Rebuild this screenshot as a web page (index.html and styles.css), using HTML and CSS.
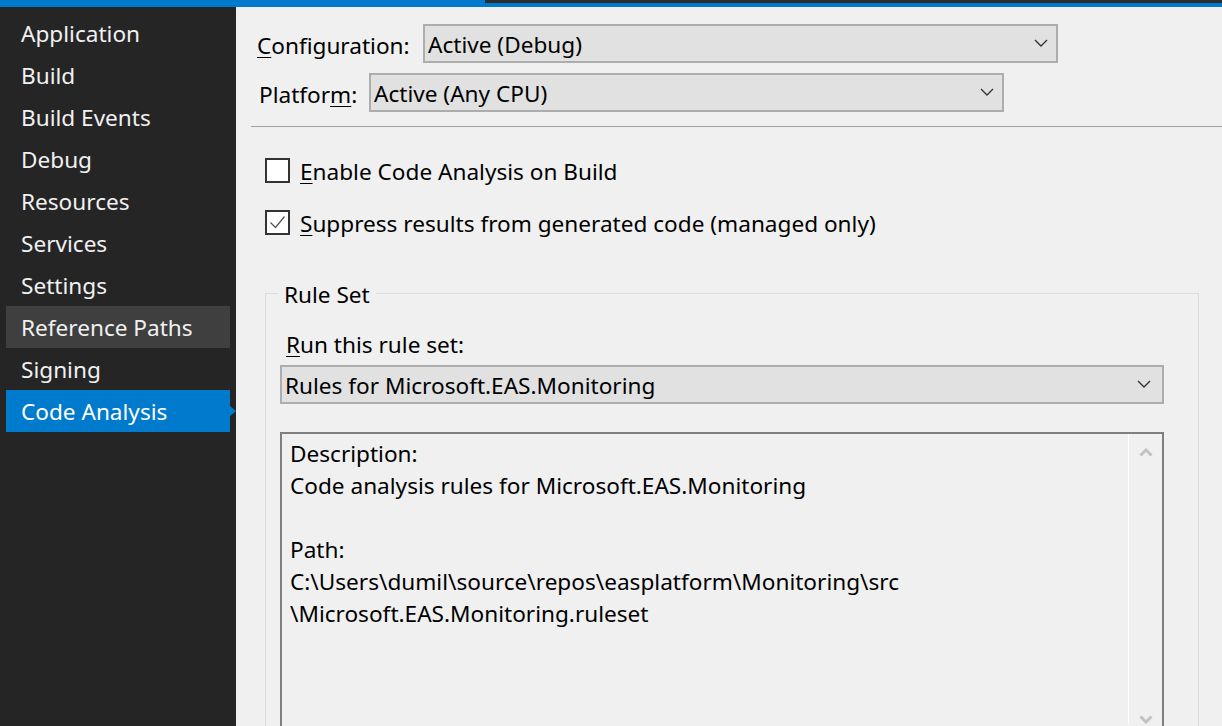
FILE: index.html
```html
<!DOCTYPE html>
<html>
<head>
<meta charset="utf-8">
<link rel="stylesheet" href="styles.css">
</head>
<body>
<div class="topbar"><div class="tab-on"></div><div class="tab-off"></div></div>
<div class="main">
  <nav class="sidebar">
    <div class="nav-item">Application</div>
    <div class="nav-item">Build</div>
    <div class="nav-item">Build Events</div>
    <div class="nav-item">Debug</div>
    <div class="nav-item">Resources</div>
    <div class="nav-item">Services</div>
    <div class="nav-item">Settings</div>
    <div class="nav-item hover">Reference Paths</div>
    <div class="nav-item">Signing</div>
    <div class="nav-item selected">Code Analysis</div>
  </nav>
  <section class="content">
    <div class="config">
      <div class="row">
        <label class="lbl-config"><u>C</u>onfiguration:</label>
        <div class="combo">Active (Debug)<svg class="chev" width="14" height="8" viewBox="0 0 14 8"><path d="M1 1 L7 7 L13 1" fill="none" stroke="#333" stroke-width="1.4"/></svg></div>
      </div>
      <div class="row">
        <label class="lbl-platform">Platfor<u>m</u>:</label>
        <div class="combo">Active (Any CPU)<svg class="chev" width="14" height="8" viewBox="0 0 14 8"><path d="M1 1 L7 7 L13 1" fill="none" stroke="#333" stroke-width="1.4"/></svg></div>
      </div>
    </div>
    <div class="sep"></div>
    <div class="checks">
      <div class="check"><span class="box"></span><span><u>E</u>nable Code Analysis on Build</span></div>
      <div class="check"><span class="box"><svg width="21" height="21" viewBox="0 0 21 21"><path d="M3.5 10.5 L8.5 15.5 L17.5 4.5" fill="none" stroke="#555" stroke-width="1.3"/></svg></span><span><u>S</u>uppress results from generated code (managed only)</span></div>
    </div>
    <fieldset class="group">
      <legend>Rule Set</legend>
      <div class="run-label"><u>R</u>un this rule set:</div>
      <div class="combo wide">Rules for Microsoft.EAS.Monitoring<svg class="chev" width="14" height="8" viewBox="0 0 14 8"><path d="M1 1 L7 7 L13 1" fill="none" stroke="#333" stroke-width="1.4"/></svg></div>
      <div class="desc">
        <div class="desc-text">Description:<br>Code analysis rules for Microsoft.EAS.Monitoring<br><br>Path:<br>C:\Users\dumil\source\repos\easplatform\Monitoring\src<br>\Microsoft.EAS.Monitoring.ruleset</div>
        <div class="scroll">
          <svg width="14" height="9" viewBox="0 0 14 9"><path d="M1.5 7.5 L7 2 L12.5 7.5" fill="none" stroke="#c2c2c2" stroke-width="3"/></svg>
          <svg width="14" height="9" viewBox="0 0 14 9"><path d="M1.5 1.5 L7 7 L12.5 1.5" fill="none" stroke="#c2c2c2" stroke-width="3"/></svg>
        </div>
      </div>
    </fieldset>
  </section>
</div>
</body>
</html>
```

FILE: styles.css
```css
* { box-sizing: border-box; }
html, body { margin: 0; padding: 0; }
body {
  width: 1222px;
  height: 726px;
  overflow: hidden;
  background: #f0f0f0;
  font-family: "Noto Sans", "Open Sans", sans-serif;
  font-size: 22.6px;
  color: #000;
}
u { text-decoration-thickness: 1px; text-underline-offset: 3px; }

.topbar { display: flex; height: 7px; background: #007acc; }
.tab-on { width: 485px; }
.tab-off { flex: 1; height: 3px; background: #2d2d30; }

.main { display: flex; height: 719px; }

.sidebar {
  width: 236px;
  flex: none;
  background: #252526;
  padding-top: 5px;
}
.nav-item {
  position: relative;
  height: 42px;
  margin: 0 6px;
  padding-left: 15px;
  padding-top: 2px;
  line-height: 40px;
  color: #f1f1f1;
  white-space: nowrap;
}
.nav-item.hover { background: #3f3f40; }
.nav-item.selected { background: #007acc; color: #fff; }
.nav-item.selected::after {
  content: "";
  position: absolute;
  right: -6px;
  top: 16px;
  border-top: 5px solid transparent;
  border-bottom: 5px solid transparent;
  border-left: 6px solid #007acc;
}

.content { flex: 1; padding-top: 17px; }
.config { padding-left: 21px; }
.row { display: flex; align-items: center; height: 39px; margin-bottom: 10px; }
.row:last-child { margin-bottom: 0; }
.lbl-config { width: 166px; flex: none; padding-top: 4px; }
.lbl-platform { width: 110px; flex: none; margin-left: 2px; padding-top: 4px; }

.combo {
  position: relative;
  width: 635px;
  height: 39px;
  background: #e1e1e1;
  border: 2px solid #adadad;
  padding-left: 3px;
  padding-top: 2px;
  line-height: 33px;
  white-space: nowrap;
}
.combo .chev { position: absolute; right: 8px; top: 13px; }

.sep { height: 1px; background: #a0a0a0; margin: 14px 0 0 15px; }

.checks { padding: 30px 0 0 29px; }
.check { display: flex; align-items: center; height: 26px; margin-bottom: 26px; }
.check:last-child { margin-bottom: 0; }
.check > span:last-child { padding-top: 2px; }
.box {
  width: 25px; height: 25px;
  border: 2px solid #333;
  background: #fff;
  margin-right: 10px;
  flex: none;
}
.box svg { display: block; }

.group {
  margin: 43px 25px 0 29px;
  padding: 0 34px 0 14px;
  border: 1px solid #dcdcdc;
  border-bottom: none;
  min-width: 0;
  height: 480px;
}
.group legend { padding: 4px 6px 0 6px; margin-left: -2px; line-height: 26px; }
.run-label { padding: 23px 0 0 6px; line-height: 28px; }
.combo.wide { width: 884px; margin-top: 6px; padding-left: 3px; }
.combo.wide .chev { right: 11px; }

.desc {
  display: flex;
  margin-top: 28px;
  width: 884px;
  height: 320px;
  border: 2px solid #7f7f7f;
  border-bottom: none;
}
.desc-text {
  flex: 1;
  padding: 4px 0 0 8px;
  line-height: 32px;
  white-space: nowrap;
}
.scroll {
  width: 34px;
  flex: none;
  border-left: 1px solid #fff;
  display: flex;
  flex-direction: column;
  justify-content: space-between;
  align-items: center;
  padding: 14px 0 0 0;
  height: 290px;
}
.scroll svg { display: block; }
```
